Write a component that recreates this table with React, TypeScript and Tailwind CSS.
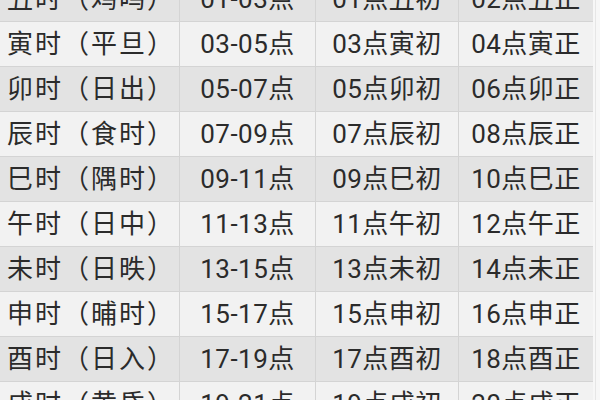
const rows = [
  ['丑时（鸡鸣）', '01-03点', '01点丑初', '02点丑正'],
  ['寅时（平旦）', '03-05点', '03点寅初', '04点寅正'],
  ['卯时（日出）', '05-07点', '05点卯初', '06点卯正'],
  ['辰时（食时）', '07-09点', '07点辰初', '08点辰正'],
  ['巳时（隅时）', '09-11点', '09点巳初', '10点巳正'],
  ['午时（日中）', '11-13点', '11点午初', '12点午正'],
  ['未时（日昳）', '13-15点', '13点未初', '14点未正'],
  ['申时（晡时）', '15-17点', '15点申初', '16点申正'],
  ['酉时（日入）', '17-19点', '17点酉初', '18点酉正'],
  ['戌时（黄昏）', '19-21点', '19点戌初', '20点戌正'],
];

export default function App() {
  return (
    <div className="w-[600px] h-[400px] overflow-hidden bg-[#f7f7f7] flex font-['Roboto','Noto_Sans_CJK_SC',sans-serif] text-[26px] tracking-[0.5px] text-[#2b2b2b]">
      <div className="w-[593px] mt-[-23px] flex flex-col">
        {rows.map((r, i) => (
          <div
            key={r[0]}
            className={`grid grid-cols-[180px_136px_143px_134px] h-[45px] shrink-0 border-b border-[#d4d4d4] ${
              i % 2 === 0 ? 'bg-[#e3e3e3]' : 'bg-[#f2f2f2]'
            }`}
          >
            <div className="flex items-center pl-[7px] tracking-[2px] border-r border-[#d4d4d4] whitespace-nowrap">{r[0]}</div>
            <div className="flex items-center justify-center border-r border-[#d4d4d4] whitespace-nowrap">{r[1]}</div>
            <div className="flex items-center justify-center border-r border-[#d4d4d4] whitespace-nowrap">{r[2]}</div>
            <div className="flex items-center justify-center whitespace-nowrap">{r[3]}</div>
          </div>
        ))}
      </div>
      <div className="w-px h-full bg-[#e6e6e6] ml-[2px]" />
    </div>
  );
}
